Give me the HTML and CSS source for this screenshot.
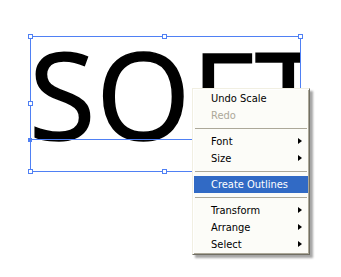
FILE: index.html
```html
<!DOCTYPE html>
<html>
<head>
<meta charset="utf-8">
<link rel="stylesheet" href="styles.css">
</head>
<body>
<div class="canvas">
  <div class="object">
    <div class="text-clip"><div class="big-text">SOFT</div></div>
    <div class="frame"></div>
    <div class="baseline"></div>
    <span class="handle h-tl"></span>
    <span class="handle h-tc"></span>
    <span class="handle h-tr"></span>
    <span class="handle h-ml"></span>
    <span class="handle h-bl"></span>
    <span class="handle h-bc"></span>
    <span class="anchor"></span>
  </div>

  <div class="menu">
    <div class="item">Undo Scale</div>
    <div class="item disabled">Redo</div>
    <div class="sep"></div>
    <div class="item sub">Font</div>
    <div class="item sub">Size</div>
    <div class="sep"></div>
    <div class="item active">Create Outlines</div>
    <div class="sep"></div>
    <div class="item sub">Transform</div>
    <div class="item sub">Arrange</div>
    <div class="item sub">Select</div>
  </div>
</div>
</body>
</html>
```

FILE: styles.css
```css
html, body {
  margin: 0;
  padding: 0;
  background: #ffffff;
}

.canvas {
  position: relative;
  width: 341px;
  height: 277px;
  overflow: hidden;
}

.object {
  position: absolute;
  left: 30px;
  top: 36px;
  width: 271px;
  height: 136px;
}

.text-clip {
  position: absolute;
  left: 0;
  top: 0;
  width: 271px;
  height: 136px;
  overflow: hidden;
}

.big-text {
  font-family: "Open Sans", sans-serif;
  font-weight: 400;
  font-size: 121px;
  line-height: 120px;
  margin-top: -3px;
  margin-left: -1px;
  letter-spacing: 1px;
  color: #000;
  -webkit-text-stroke: 1.5px #000;
  white-space: nowrap;
}

.frame {
  position: absolute;
  inset: 0;
  border: 1px solid #4f80f4;
}

.baseline {
  position: absolute;
  left: 0;
  top: 103px;
  width: 180px;
  height: 1px;
  background: #4f80f4;
}

.handle {
  position: absolute;
  width: 3px;
  height: 3px;
  background: #fff;
  border: 1px solid #4f80f4;
}

.h-tl { left: -2px; top: -2px; }
.h-tc { left: 132px; top: -2px; }
.h-tr { left: 268px; top: -2px; }
.h-ml { left: -2px; top: 65px; }
.h-bl { left: -2px; top: 133px; }
.h-bc { left: 132px; top: 133px; }

.anchor {
  position: absolute;
  left: -2px;
  top: 102px;
  width: 4px;
  height: 4px;
  background: #4f80f4;
}

.menu {
  position: absolute;
  left: 192px;
  top: 88px;
  width: 114px;
  padding: 1px;
  background: #fcfcf8;
  border: 1px solid;
  border-color: #f1efe2 #716f64 #716f64 #f1efe2;
  box-shadow: inset 1px 1px 0 #ffffff, inset -1px -1px 0 #aca899, 3px 3px 2px rgba(0, 0, 0, 0.35);
  font-family: "DejaVu Sans", sans-serif;
  font-stretch: condensed;
  font-size: 11px;
  color: #000;
}

.item {
  position: relative;
  height: 17px;
  line-height: 17px;
  padding-left: 17px;
  white-space: nowrap;
}

.item.disabled {
  color: #aca899;
}

.item.active {
  background: #316ac5;
  color: #fff;
}

.item.sub::after {
  content: "";
  position: absolute;
  right: 6px;
  top: 5px;
  width: 0;
  height: 0;
  border-top: 3.5px solid transparent;
  border-bottom: 3.5px solid transparent;
  border-left: 4px solid #000;
}

.sep {
  height: 9px;
  display: flex;
  align-items: center;
}

.sep::before {
  content: "";
  display: block;
  width: 100%;
  height: 1px;
  margin: 0 1px;
  background: #aca899;
}
```
